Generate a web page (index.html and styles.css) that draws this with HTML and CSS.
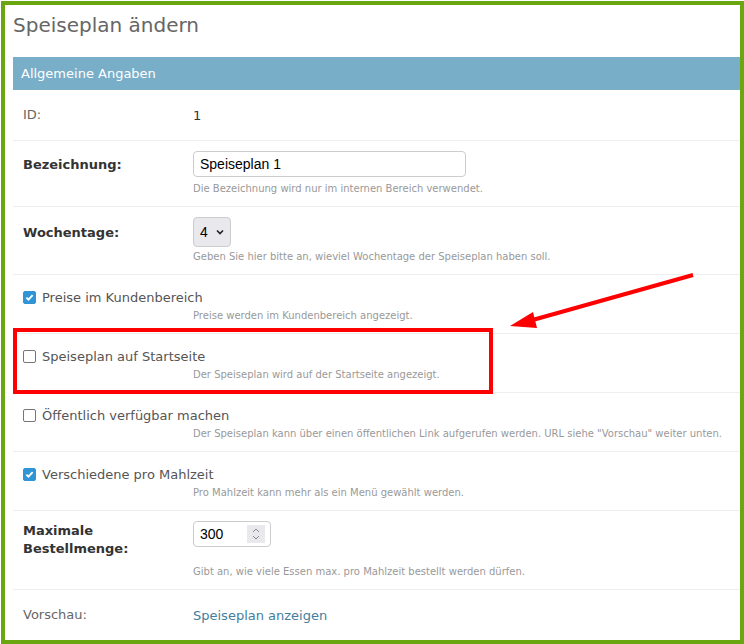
FILE: index.html
```html
<!DOCTYPE html>
<html lang="de">
<head>
    <meta charset="UTF-8">
    <meta name="viewport" content="width=device-width, initial-scale=1.0">
    <title>Speiseplan ändern</title>
    <link rel="stylesheet" href="styles.css">
</head>
<body>
    <div class="frame">
        <h1 class="page-title">Speiseplan ändern</h1>

        <fieldset class="module">
            <h2 class="module-title">Allgemeine Angaben</h2>

            <div class="form-row">
                <div class="row-main plain">
                    <label class="field-label">ID:</label>
                    <div class="readonly">1</div>
                </div>
            </div>

            <div class="form-row">
                <div class="row-main">
                    <label class="field-label required" for="bezeichnung">Bezeichnung:</label>
                    <input class="text-input" id="bezeichnung" type="text" value="Speiseplan 1">
                </div>
                <div class="help">Die Bezeichnung wird nur im internen Bereich verwendet.</div>
            </div>

            <div class="form-row">
                <div class="row-main">
                    <label class="field-label required label-select" for="wochentage">Wochentage:</label>
                    <div class="select-box">
                        <span>4</span>
                        <svg width="10" height="6" viewBox="0 0 10 6"><path d="M2 1.5 L5 4.5 L8 1.5" fill="none" stroke="#222" stroke-width="1.6"/></svg>
                    </div>
                </div>
                <div class="help help-select">Geben Sie hier bitte an, wieviel Wochentage der Speiseplan haben soll.</div>
            </div>

            <div class="form-row">
                <div class="check-line">
                    <span class="check checked"><svg width="13" height="13" viewBox="0 0 13 13"><path d="M2.8 6.6 L5.3 9.1 L10.2 3.8" fill="none" stroke="#fff" stroke-width="2.2"/></svg></span>
                    <span class="check-label">Preise im Kundenbereich</span>
                </div>
                <div class="help check-help">Preise werden im Kundenbereich angezeigt.</div>
            </div>

            <div class="form-row">
                <div class="check-line">
                    <span class="check"></span>
                    <span class="check-label">Speiseplan auf Startseite</span>
                </div>
                <div class="help check-help">Der Speiseplan wird auf der Startseite angezeigt.</div>
            </div>

            <div class="form-row">
                <div class="check-line">
                    <span class="check"></span>
                    <span class="check-label">Öffentlich verfügbar machen</span>
                </div>
                <div class="help check-help">Der Speiseplan kann über einen öffentlichen Link aufgerufen werden. URL siehe "Vorschau" weiter unten.</div>
            </div>

            <div class="form-row">
                <div class="check-line">
                    <span class="check checked"><svg width="13" height="13" viewBox="0 0 13 13"><path d="M2.8 6.6 L5.3 9.1 L10.2 3.8" fill="none" stroke="#fff" stroke-width="2.2"/></svg></span>
                    <span class="check-label">Verschiedene pro Mahlzeit</span>
                </div>
                <div class="help check-help">Pro Mahlzeit kann mehr als ein Menü gewählt werden.</div>
            </div>

            <div class="form-row">
                <div class="row-main">
                    <label class="field-label required label-multi" for="menge">Maximale Bestellmenge:</label>
                    <div class="number-box">
                        <span>300</span>
                        <span class="spinner">
                            <svg width="12" height="16" viewBox="0 0 12 16"><path d="M3 6 L6 3 L9 6 M3 10 L6 13 L9 10" fill="none" stroke="#888" stroke-width="1"/></svg>
                        </span>
                    </div>
                </div>
                <div class="help help-multi">Gibt an, wie viele Essen max. pro Mahlzeit bestellt werden dürfen.</div>
            </div>

            <div class="form-row last">
                <div class="row-main plain">
                    <label class="field-label">Vorschau:</label>
                    <a class="preview-link" href="#">Speiseplan anzeigen</a>
                </div>
            </div>
        </fieldset>

        <svg class="annotation" width="743" height="643" viewBox="0 0 743 643">
            <rect x="14" y="329" width="476" height="62" fill="none" stroke="#ff0000" stroke-width="4"/>
            <line x1="692" y1="274" x2="528" y2="320" stroke="#ff0000" stroke-width="4"/>
            <polygon points="509,325 532,311 536,327" fill="#ff0000"/>
        </svg>
    </div>
</body>
</html>
```

FILE: styles.css
```css
body {
    margin: 0;
    font-family: "DejaVu Sans", Verdana, sans-serif;
    color: #333;
    background-color: #fff;
}
.frame {
    position: relative;
    box-sizing: border-box;
    width: 743px;
    height: 643px;
    margin: 1px 0 0 1px;
    border: 4px solid #6aa60f;
    padding: 0 0 0 8px;
    overflow: hidden;
}
.page-title {
    margin: 0;
    padding: 7px 0 0 0;
    height: 45px;
    font-size: 20px;
    font-weight: normal;
    line-height: 26px;
    color: #666;
}
.module {
    margin: 0;
    padding: 0;
    border: 0;
}
.module-title {
    margin: 0;
    height: 33px;
    padding: 0 8px;
    background-color: #79aec8;
    color: #fff;
    font-size: 13px;
    font-weight: normal;
    line-height: 33px;
}
.form-row {
    padding: 10px;
    border-bottom: 1px solid #eee;
}
.form-row.last {
    border-bottom: 0;
}
.row-main {
    display: flex;
    align-items: flex-start;
}
.row-main.plain {
    align-items: center;
    min-height: 30px;
}
.field-label {
    width: 170px;
    flex-shrink: 0;
    font-size: 13px;
    line-height: 18px;
    color: #666;
    padding-top: 5px;
}
.row-main.plain .field-label {
    padding-top: 0;
}
.field-label.required {
    font-weight: bold;
    color: #333;
}
.label-select {
    padding-top: 7px;
}
.label-multi {
    padding-top: 1px;
    width: 150px;
    margin-right: 20px;
}
.readonly {
    font-size: 13px;
    color: #333;
}
.text-input {
    box-sizing: border-box;
    width: 273px;
    height: 26px;
    margin: 0;
    padding: 2px 6px;
    border: 1px solid #ccc;
    border-radius: 4px;
    font-family: "Liberation Sans", Arial, sans-serif;
    font-size: 14px;
    color: #000;
}
.select-box {
    box-sizing: border-box;
    width: 38px;
    height: 30px;
    border: 1px solid #ccc;
    border-radius: 4px;
    background-color: #e9e9ed;
    display: flex;
    align-items: center;
    gap: 7px;
    padding-left: 6px;
    font-family: "Liberation Sans", Arial, sans-serif;
    font-size: 14px;
    color: #000;
}
.number-box {
    box-sizing: border-box;
    width: 78px;
    height: 26px;
    border: 1px solid #ccc;
    border-radius: 4px;
    display: flex;
    align-items: center;
    justify-content: space-between;
    padding: 0 5px 0 6px;
    font-family: "Liberation Sans", Arial, sans-serif;
    font-size: 14px;
    color: #000;
}
.spinner {
    display: flex;
    align-items: center;
    justify-content: center;
    width: 18px;
    height: 18px;
    background-color: #e9e9ed;
}
.help {
    margin: 5px 0 0 170px;
    font-size: 10px;
    line-height: 14px;
    color: #999;
}
.help-select {
    margin-top: 3px;
}
.help-multi {
    margin-top: 7px;
}
.check-line {
    display: flex;
    align-items: center;
    height: 24px;
}
.check {
    box-sizing: border-box;
    width: 13px;
    height: 13px;
    border: 1px solid #767676;
    border-radius: 2px;
    display: flex;
    align-items: center;
    justify-content: center;
    margin-right: 6px;
}
.check.checked {
    border-color: #2f95d6;
    background-color: #2f95d6;
}
.check-label {
    font-size: 13px;
    color: #555;
}
.check-help {
    margin-top: 0;
}
.preview-link {
    font-size: 13px;
    color: #447e9b;
    text-decoration: none;
}
.annotation {
    position: absolute;
    left: -4px;
    top: -4px;
    pointer-events: none;
}
```
